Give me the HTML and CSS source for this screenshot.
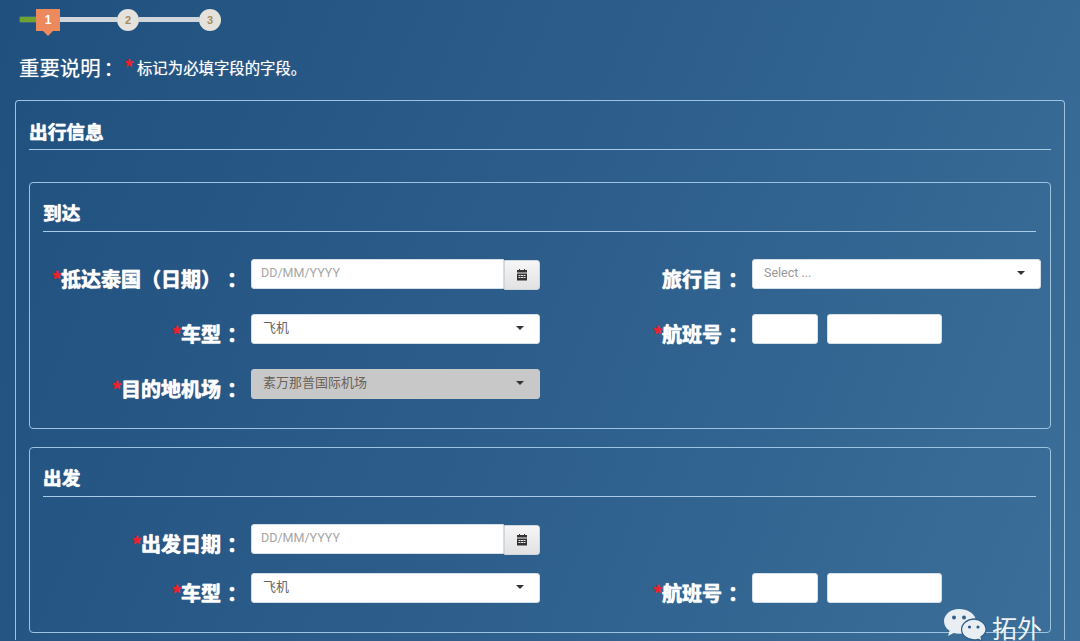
FILE: index.html
```html
<!DOCTYPE html>
<html lang="zh-CN">
<head>
    <meta charset="UTF-8">
    <meta name="viewport" content="width=device-width, initial-scale=1.0">
    <title>出行信息</title>
    <link rel="stylesheet" href="styles.css">
</head>
<body>
    <div class="stepper">
        <span class="step-done"></span>
        <span class="step-flag">1</span>
        <span class="step-line"></span>
        <span class="step-dot">2</span>
        <span class="step-line"></span>
        <span class="step-dot">3</span>
    </div>

    <p class="notice">重要说明<span class="colon">：</span><span class="req">*</span><small>标记为必填字段的字段。</small></p>

    <div class="panel">
        <h2 class="panel-title">出行信息</h2>

        <div class="box">
            <h3 class="box-title">到达</h3>
            <div class="form-grid arrive">
                <label class="field-label"><span class="req">*</span>抵达泰国（日期）<span class="colon">：</span></label>
                <div class="date-group">
                    <input class="text-input" type="text" placeholder="DD/MM/YYYY">
                    <button class="cal-btn" type="button">
                        <svg width="12" height="12" viewBox="0 0 12 12"><path fill="#333" d="M1 1h2V0h1v1h4V0h1v1h2v2.500H1zM1 4.500h10V11.500H1zM2.500 6v1h2V6zm2.500 0v1h2V6zm2.500 0v1h2V6zM2.500 8v1h2V8zm2.500 0v1h2V8zm2.500 0v1h2V8z"/></svg>
                    </button>
                </div>
                <label class="field-label">旅行自<span class="colon">：</span></label>
                <div class="select placeholder">Select ...<i class="caret"></i></div>

                <label class="field-label"><span class="req">*</span>车型<span class="colon">：</span></label>
                <div class="select">飞机<i class="caret"></i></div>
                <label class="field-label"><span class="req">*</span>航班号<span class="colon">：</span></label>
                <div class="flight-group">
                    <input class="text-input code" type="text">
                    <input class="text-input number" type="text">
                </div>

                <label class="field-label"><span class="req">*</span>目的地机场<span class="colon">：</span></label>
                <div class="select disabled">素万那普国际机场<i class="caret"></i></div>
            </div>
        </div>

        <div class="box">
            <h3 class="box-title">出发</h3>
            <div class="form-grid depart">
                <label class="field-label"><span class="req">*</span>出发日期<span class="colon">：</span></label>
                <div class="date-group">
                    <input class="text-input" type="text" placeholder="DD/MM/YYYY">
                    <button class="cal-btn" type="button">
                        <svg width="12" height="12" viewBox="0 0 12 12"><path fill="#333" d="M1 1h2V0h1v1h4V0h1v1h2v2.500H1zM1 4.500h10V11.500H1zM2.500 6v1h2V6zm2.500 0v1h2V6zm2.500 0v1h2V6zM2.500 8v1h2V8zm2.500 0v1h2V8zm2.500 0v1h2V8z"/></svg>
                    </button>
                </div>
                <span></span>
                <span></span>

                <label class="field-label"><span class="req">*</span>车型<span class="colon">：</span></label>
                <div class="select">飞机<i class="caret"></i></div>
                <label class="field-label"><span class="req">*</span>航班号<span class="colon">：</span></label>
                <div class="flight-group">
                    <input class="text-input code" type="text">
                    <input class="text-input number" type="text">
                </div>
            </div>
        </div>
    </div>

    <div class="watermark">
        <svg width="44" height="33" viewBox="0 0 44 33">
            <path fill="#e9eef2" d="M16 1C7.700 1 1 6.500 1 13.300c0 3.900 2.200 7.300 5.600 9.500L5 28l5.700-3c1.700.5 3.400.8 5.300.8 1 0 2-.1 3-.3-.4-1.200-.6-2.400-.6-3.700 0-6.300 6-11.300 13.300-11.300h.9C30.800 5 24 1 16 1z"/>
            <path fill="#e9eef2" stroke="#2f5f8a" stroke-width="1.200" d="M43 21.500c0-5.700-5.500-10.300-12.200-10.300s-12.200 4.600-12.200 10.300 5.500 10.300 12.200 10.300c1.500 0 2.900-.2 4.200-.6L39 33l-1-4.300c3-1.900 5-4.600 5-7.200z"/>
            <circle cx="11" cy="9.500" r="2" fill="#2f5f8a"/>
            <circle cx="21" cy="9.500" r="2" fill="#2f5f8a"/>
            <circle cx="26.500" cy="19" r="1.600" fill="#2f5f8a"/>
            <circle cx="35" cy="19" r="1.600" fill="#2f5f8a"/>
        </svg>
        <span class="watermark-name">拓外</span>
    </div>
</body>
</html>
```

FILE: styles.css
```css
html, body {
    height: 641px;
    overflow: hidden;
}

body {
    position: relative;
    margin: 0;
    padding: 9px 15px 0;
    box-sizing: border-box;
    background: linear-gradient(112deg, #20507e 0%, #2b5c8a 45%, #3c6f9a 100%);
    color: #fff;
    font-family: "Noto Sans CJK SC", "Liberation Sans", sans-serif;
    text-spacing-trim: space-all;
}

.req {
    color: #f0202a;
    font-weight: 700;
}

/* the colon sits in the middle of its cell in the reference */
.colon {
    padding-left: 0.3em;
    margin-right: -0.3em;
}

/* stepper */
.stepper {
    display: flex;
    align-items: flex-start;
    height: 28px;
    padding-left: 5px;
}

.step-done {
    width: 16px;
    height: 5px;
    margin-top: 8px;
    background: #6fa32e;
    box-shadow: 0 0 1px #cfe0a8;
}

.step-flag {
    position: relative;
    width: 24px;
    height: 22px;
    background: #ec8a5e;
    color: #fff;
    font: 700 12px/23px "Liberation Sans", sans-serif;
    text-align: center;
}

.step-flag::after {
    content: "";
    position: absolute;
    left: 7px;
    bottom: -5px;
    border-style: solid;
    border-width: 5px 5px 0;
    border-color: #ec8a5e transparent transparent;
}

.step-line {
    width: 60px;
    height: 5px;
    margin-top: 8px;
    background: #d0d6da;
}

.step-dot {
    width: 22px;
    height: 22px;
    border-radius: 50%;
    background: #e4e2da;
    color: #a58a5e;
    font: 700 11px/22px "Liberation Sans", sans-serif;
    text-align: center;
}

.stepper .step-line:nth-child(3) {
    width: 57px;
}

/* heading note */
.notice {
    display: flex;
    align-items: center;
    height: 30px;
    margin: 15px 0 18px 4px;
    font-size: 20.400px;
    line-height: 30px;
    text-shadow: 0 0 1px rgba(255, 255, 255, 0.6);
}

.notice .colon {
    padding-left: 0.15em;
    margin-right: -0.15em;
}

.notice .req {
    width: 13px;
    margin-left: 3px;
    font-size: 20px;
    text-shadow: none;
}

.notice small {
    font-size: 15.400px;
}

/* panels */
.panel {
    height: 540px;
    padding: 14px 13px 0;
    border: 1px solid #9cc3e2;
    border-bottom: 0;
    border-radius: 4px 4px 0 0;
    box-sizing: border-box;
}

.panel-title,
.box-title {
    margin: 0;
    border-bottom: 1px solid #a9cbe6;
    font-size: 18.700px;
    font-weight: 700;
    line-height: 32px;
    -webkit-text-stroke: 0.3px #fff;
    text-shadow: 0 0 1px #fff;
}

.panel-title {
    height: 34px;
    margin-bottom: 32px;
}

.box {
    margin-bottom: 18px;
    padding: 14px 14px 29px 13px;
    border: 1px solid #9cc3e2;
    border-radius: 4px;
}

.box-title {
    height: 34px;
    line-height: 30px;
}

/* form */
.form-grid {
    display: grid;
    grid-template-columns: 198px 289px 192px 289px;
    grid-auto-rows: 30px;
    column-gap: 10px;
}

.arrive {
    margin-top: 27px;
    row-gap: 25px;
}

.depart {
    margin-top: 27px;
    row-gap: 19px;
}

.field-label {
    padding-top: 5px;
    font-size: 20px;
    font-weight: 700;
    line-height: 30px;
    text-align: right;
    white-space: nowrap;
    -webkit-text-stroke: 0.4px #fff;
    text-shadow: 0 0 1px #fff;
}

.field-label .req {
    margin-right: -1px;
    -webkit-text-stroke: 0.4px #f0202a;
    text-shadow: none;
}

.text-input,
.select {
    height: 30px;
    box-sizing: border-box;
    border: 1px solid #d5dfe8;
    border-radius: 3px;
    background: #fff;
    font-family: "Roboto", "Noto Sans CJK SC", sans-serif;
    font-size: 12.500px;
}

.text-input {
    padding: 0 9px 4px;
    outline: none;
}

.text-input::placeholder {
    color: #a6a6a6;
}

.date-group {
    display: flex;
}

.date-group .text-input {
    flex: 1;
    min-width: 0;
    border-radius: 3px 0 0 3px;
}

.cal-btn {
    display: flex;
    align-items: center;
    justify-content: center;
    width: 36px;
    height: 30px;
    margin-top: 1px;
    padding: 0;
    border: 1px solid #cfd6dc;
    border-radius: 0 3px 3px 0;
    background: linear-gradient(#f6f6f6, #e2e2e2);
}

.select {
    position: relative;
    padding: 0 11px;
    color: #666;
    font-size: 13px;
    line-height: 26px;
}

.select.placeholder {
    color: #999;
    font-size: 12.500px;
}

.select.disabled {
    border-color: #c9c9c9;
    background: #c8c8c8;
    color: #6b6258;
}

.caret {
    position: absolute;
    top: 11px;
    right: 15px;
    border-style: solid;
    border-width: 4px 4px 0;
    border-color: #333 transparent transparent;
}

.flight-group {
    display: flex;
    gap: 9px;
}

.flight-group .code {
    width: 66px;
}

.flight-group .number {
    width: 115px;
}

/* corner mark over the picture */
.watermark {
    position: absolute;
    left: 943px;
    top: 608px;
    display: flex;
    align-items: flex-start;
    gap: 5px;
    color: #eef2f5;
}

.watermark-name {
    margin-top: 6px;
    font-size: 25px;
    line-height: 26px;
}
```
